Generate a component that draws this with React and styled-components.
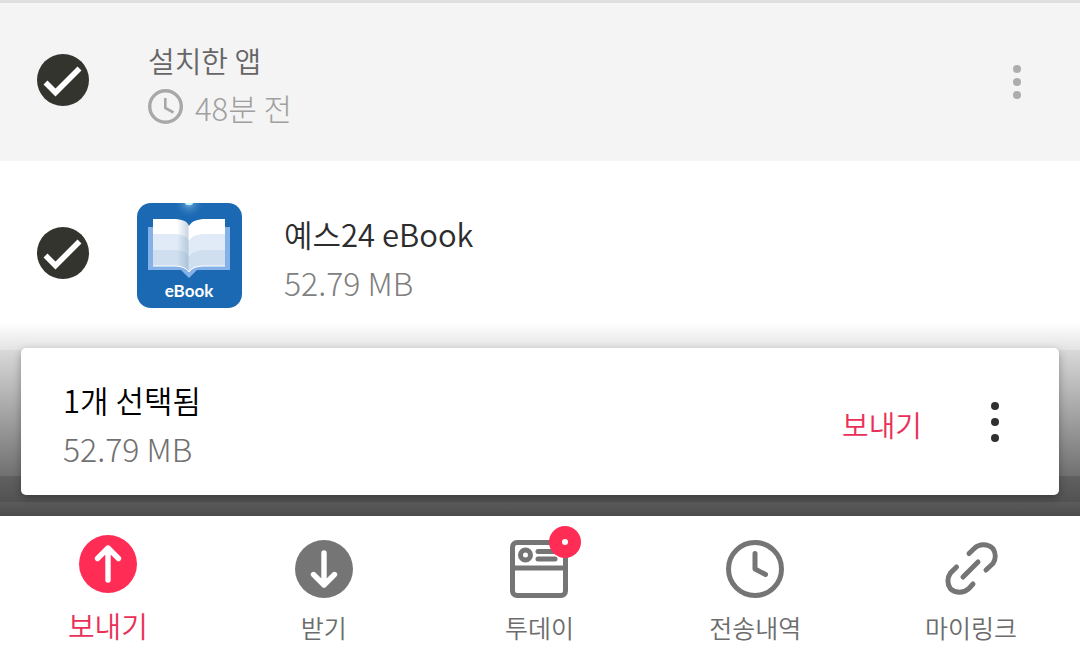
import { useState } from "react";
import styled, { createGlobalStyle } from "styled-components";

const GlobalStyle = createGlobalStyle`
  * {
    box-sizing: border-box;
  }

  body {
    margin: 0;
    background: #fff;
    font-family: "Noto Sans CJK KR", sans-serif;
    font-weight: 350;
  }

  button {
    border: none;
    padding: 0;
    background: none;
    font: inherit;
    cursor: pointer;
  }
`;

const GroupHeader = styled.header`
  display: flex;
  align-items: center;
  height: 161px;
  padding: 0 52px 0 37px;
  background: #f4f4f4;
  border-top: 3px solid #dfdfdf;
`;

const AppRow = styled.div`
  display: flex;
  align-items: center;
  padding: 42px 52px 14px 37px;
`;

const CheckLabel = styled.label`
  display: grid;
  flex: none;
  width: 52px;
  height: 52px;
  margin-bottom: 5px;
  margin-right: ${({ $gap }) => $gap}px;
  cursor: pointer;

  & > * {
    grid-area: 1 / 1;
  }

  svg {
    pointer-events: none;
  }
`;

const CheckInput = styled.input`
  appearance: none;
  width: 52px;
  height: 52px;
  margin: 0;
  border-radius: 50%;
  background: #c8c8c8;

  &:checked {
    background: #34342f;
  }
`;

const TextBlock = styled.div`
  flex: 1;
  min-width: 0;
  padding-top: 4px;
`;

const Title = styled.div`
  font-size: ${({ $size }) => $size}px;
  line-height: 48px;
  font-weight: 350;
  color: ${({ $color }) => $color};
`;

const Meta = styled.div`
  display: flex;
  align-items: center;
  gap: 12px;
  font-size: ${({ $size }) => $size || 32}px;
  line-height: 48px;
  font-weight: 300;
  color: ${({ $color }) => $color};

  svg {
    margin-bottom: 4px;
  }
`;

const AppIcon = styled.svg`
  flex: none;
  width: 105px;
  height: 105px;
  margin-right: 42px;
`;

const MoreButton = styled.button`
  display: flex;
  flex-direction: column;
  align-items: center;
  justify-content: center;
  gap: ${({ $gap }) => $gap}px;
  width: 22px;
  height: 60px;
`;

const MoreDot = styled.span`
  width: 8px;
  height: 8px;
  border-radius: 50%;
  background: ${({ $color }) => $color};
`;

const Dock = styled.section`
  padding: 26px 21px 21px;
  background: linear-gradient(
    #fff 0,
    #e3e3e3 28px,
    #d9d9d9 28px,
    #707070 154px,
    #606060 154px,
    #525252 180px,
    #5c5c5c 180px,
    #4c4c4c 100%
  );
`;

const SelectionCard = styled.div`
  display: flex;
  align-items: center;
  height: 147px;
  padding: 0 53px 0 42px;
  border-radius: 5px;
  background: #fff;
  box-shadow: 0 3px 8px rgba(0, 0, 0, 0.3);
`;

const SendButton = styled.button`
  margin-right: 62px;
  padding-top: 4px;
  font-size: 29px;
  line-height: 48px;
  font-weight: 350;
  color: #ea3058;
`;

const Nav = styled.nav`
  display: grid;
  grid-template-columns: repeat(5, 1fr);
  height: 146px;
  padding-right: 1px;
  background: #fff;
`;

const NavItem = styled.button`
  display: flex;
  flex-direction: column;
  align-items: center;
  padding-top: ${({ $active }) => ($active ? 19 : 24)}px;
  font-size: ${({ $active }) => ($active ? 29 : 25)}px;
  line-height: ${({ $active }) => ($active ? 64 : 58)}px;
  font-weight: 350;
  color: ${({ $active }) => ($active ? "#ea3058" : "#6c6c6c")};
`;

const NavIcon = styled.span`
  position: relative;
  display: block;
  width: 58px;
  height: 58px;
  color: #757575;

  svg {
    display: block;
  }
`;

const Badge = styled.span`
  position: absolute;
  top: -14px;
  right: -13px;
  display: grid;
  place-items: center;
  width: 32px;
  height: 32px;
  border-radius: 50%;
  background: #ff2d55;

  &::after {
    content: "";
    width: 6px;
    height: 6px;
    border-radius: 50%;
    background: #fff;
  }
`;

function Check({ label, gap }) {
  const [checked, setChecked] = useState(true);

  return (
    <CheckLabel $gap={gap}>
      <CheckInput
        type="checkbox"
        aria-label={label}
        checked={checked}
        onChange={(e) => setChecked(e.target.checked)}
      />
      <svg width="52" height="52" viewBox="0 0 52 52" fill="none">
        <path d="M8.5 28.5 L18.5 38.5 L42.5 14.5" stroke="#fff" strokeWidth="5.6" />
      </svg>
    </CheckLabel>
  );
}

function More({ color, gap }) {
  return (
    <MoreButton $gap={gap} aria-label="더보기">
      <MoreDot $color={color} />
      <MoreDot $color={color} />
      <MoreDot $color={color} />
    </MoreButton>
  );
}

function EbookIcon() {
  return (
    <AppIcon viewBox="0 0 105 105" role="img" aria-label="eBook">
      <defs>
        <radialGradient id="glow" cx="52" cy="0" r="16" gradientUnits="userSpaceOnUse">
          <stop offset="0" stopColor="#7cc0e6" />
          <stop offset="0.3" stopColor="#4389c6" />
          <stop offset="1" stopColor="#1b69b3" stopOpacity="0" />
        </radialGradient>
        <linearGradient id="fold" x1="0" x2="1" y1="0" y2="0">
          <stop offset="0" stopColor="#7d9bb8" stopOpacity="0" />
          <stop offset="0.9" stopColor="#7d9bb8" stopOpacity="0.4" />
          <stop offset="1" stopColor="#7d9bb8" stopOpacity="0.1" />
        </linearGradient>
        <clipPath id="pages">
          <path d="M16 16 H36 C45 16 50 18 52 23 C55 18 60 16 69 16 H88 V63 H68 C59 63 55 65 52 69 C49 65 45 63 36 63 H16 Z" />
        </clipPath>
        <clipPath id="tile">
          <rect width="105" height="105" rx="14" />
        </clipPath>
      </defs>
      <g clipPath="url(#tile)">
        <rect width="105" height="105" fill="#1b69b3" />
        <circle cx="52" cy="0" r="16" fill="url(#glow)" />
        <ellipse cx="52" cy="0" rx="4" ry="2" fill="#c8f5fb" />
      </g>
      <path d="M11 24 H93 V67 H60 L52 75 L44 67 H11 Z" fill="#84b2e8" />
      <g clipPath="url(#pages)">
        <rect x="16" y="16" width="72" height="54" fill="#fff" />
        <path d="M16 31 H36 C45 31 50 33 52 38 C55 33 60 31 69 31 H88 V70 H16 Z" fill="#e0ebf7" />
        <path d="M16 47 H36 C45 47 50 49 52 54 C55 49 60 47 69 47 H88 V70 H16 Z" fill="#cfdff0" />
        <rect x="40" y="16" width="12" height="54" fill="url(#fold)" />
      </g>
      <path
        d="M16 63 H36 C45 63 49 65 52 69 C55 65 59 63 68 63 H88"
        fill="none"
        stroke="#fff"
        strokeWidth="1"
      />
      <text
        x="52"
        y="94"
        textAnchor="middle"
        fill="#fff"
        fontFamily="Lato, sans-serif"
        fontSize="17"
        fontWeight="700"
      >
        eBook
      </text>
    </AppIcon>
  );
}

function SmallClock() {
  return (
    <svg width="35" height="35" viewBox="0 0 35 35" fill="none" stroke="#a8a8a8">
      <circle cx="17.5" cy="17.5" r="15.8" strokeWidth="3.4" />
      <path d="M17.3 9 V19 L25.5 23.5" strokeWidth="2.6" />
    </svg>
  );
}

function ArrowIcon({ color, down }) {
  return (
    <svg width="58" height="58" viewBox="0 0 58 58" fill="none">
      <circle cx="29" cy="29" r="29" fill={color} />
      <path
        d={down ? "M29 13 V45 M18.5 34.5 L29 45 L39.5 34.5" : "M29 45 V13 M18.5 23.5 L29 13 L39.5 23.5"}
        stroke="#fff"
        strokeWidth="5.4"
        strokeLinecap="round"
        strokeLinejoin="round"
      />
    </svg>
  );
}

function TodayIcon() {
  return (
    <svg width="58" height="58" viewBox="0 0 58 58" fill="none" stroke="currentColor" strokeWidth="5">
      <rect x="2.5" y="2.5" width="53" height="53" rx="4.5" />
      <path d="M2.5 28 H55.5" />
      <circle cx="15.5" cy="15" r="5" />
      <path d="M28 11.5 H45 M28 19 H45" strokeLinecap="round" />
    </svg>
  );
}

function ClockIcon() {
  return (
    <svg width="58" height="58" viewBox="0 0 58 58" fill="none" stroke="currentColor" strokeWidth="5">
      <circle cx="29" cy="29" r="26.5" />
      <path d="M29 13.5 V29 L39.5 34.5" strokeLinecap="round" strokeLinejoin="round" />
    </svg>
  );
}

function LinkIcon() {
  return (
    <svg
      width="58"
      height="58"
      viewBox="0 0 58 58"
      fill="none"
      stroke="currentColor"
      strokeWidth="5"
      strokeLinecap="round"
    >
      <path d="M27 13.5 L32 8.7 A13.5 13.5 0 0 1 51 8.7 A13.5 13.5 0 0 1 51 23.5 L44 30" />
      <path d="M14.5 27 L8.5 33 A13.5 13.5 0 0 0 8.5 48.9 A13.5 13.5 0 0 0 26.5 48.9 L31 44" />
      <path d="M21 37 L36 22" />
    </svg>
  );
}

const navItems = [
  { id: "send", label: "보내기", icon: <ArrowIcon color="#ff2d55" /> },
  { id: "receive", label: "받기", icon: <ArrowIcon color="#757575" down /> },
  { id: "today", label: "투데이", icon: <TodayIcon />, badge: true },
  { id: "history", label: "전송내역", icon: <ClockIcon /> },
  { id: "link", label: "마이링크", icon: <LinkIcon /> },
];

function App() {
  return (
    <>
      <GlobalStyle />
      <GroupHeader>
        <Check label="설치한 앱" gap={59} />
        <TextBlock>
          <Title $size={29} $color="#666">
            설치한 앱
          </Title>
          <Meta $size={31} $color="#a0a0a0">
            <SmallClock />
            48분 전
          </Meta>
        </TextBlock>
        <More color="#adadad" gap={5} />
      </GroupHeader>

      <AppRow>
        <Check label="예스24 eBook" gap={48} />
        <EbookIcon />
        <TextBlock>
          <Title $size={31} $color="#2c2c2c">
            예스24 eBook
          </Title>
          <Meta $color="#808080">52.79 MB</Meta>
        </TextBlock>
      </AppRow>

      <Dock>
        <SelectionCard>
          <TextBlock>
            <Title $size={31} $color="#000">
              1개 선택됨
            </Title>
            <Meta $color="#707070">52.79 MB</Meta>
          </TextBlock>
          <SendButton>보내기</SendButton>
          <More color="#303030" gap={8} />
        </SelectionCard>
      </Dock>

      <Nav>
        {navItems.map((item) => (
          <NavItem key={item.id} $active={item.id === "send"}>
            <NavIcon>
              {item.icon}
              {item.badge && <Badge />}
            </NavIcon>
            {item.label}
          </NavItem>
        ))}
      </Nav>
    </>
  );
}

export default App;
